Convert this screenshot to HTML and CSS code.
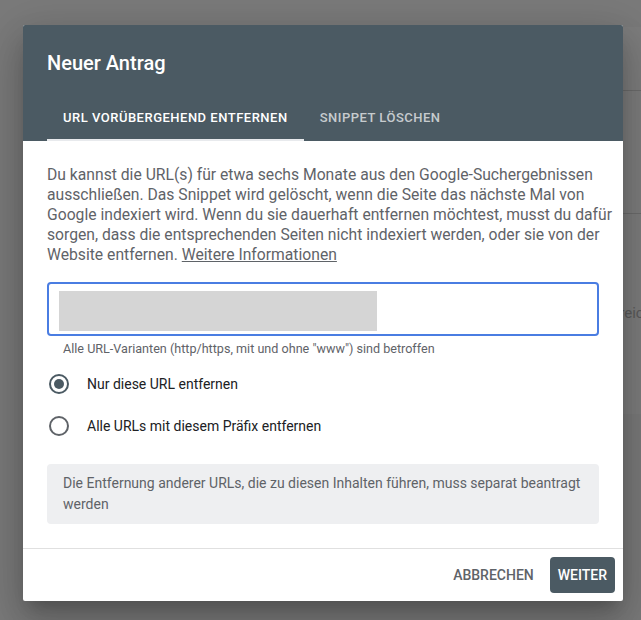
FILE: index.html
```html
<!DOCTYPE html>
<html lang="de">
<head>
<meta charset="utf-8">
<title>Neuer Antrag</title>
<link rel="stylesheet" href="styles.css">
</head>
<body>
<div class="page">
  <div class="bg-card">
    <div class="bg-row bg-row-1"></div>
    <div class="bg-row bg-row-2"></div>
    <span class="bg-text">Bereich</span>
  </div>
</div>
<div class="dialog">
  <div class="dialog-header">
    <h1 class="dialog-title">Neuer Antrag</h1>
    <div class="tabs">
      <div class="tab tab-active">URL vorübergehend entfernen</div>
      <div class="tab">Snippet löschen</div>
    </div>
  </div>
  <div class="dialog-body">
    <p class="intro">Du kannst die URL(s) für etwa sechs Monate aus den Google-Suchergebnissen ausschließen. Das Snippet wird gelöscht, wenn die Seite das nächste Mal von Google indexiert wird. Wenn du sie dauerhaft entfernen möchtest, musst du dafür sorgen, dass die entsprechenden Seiten nicht indexiert werden, oder sie von der Website entfernen. <a class="link" href="#">Weitere Informationen</a></p>
    <div class="url-field"><div class="redacted"></div></div>
    <div class="helper">Alle URL-Varianten (http/https, mit und ohne "www") sind betroffen</div>
    <div class="radios">
      <label class="radio-row">
        <span class="radio radio-on"><span class="radio-dot"></span></span>
        <span class="radio-label">Nur diese URL entfernen</span>
      </label>
      <label class="radio-row">
        <span class="radio"></span>
        <span class="radio-label">Alle URLs mit diesem Präfix entfernen</span>
      </label>
    </div>
    <div class="note">Die Entfernung anderer URLs, die zu diesen Inhalten führen, muss separat beantragt werden</div>
  </div>
  <div class="dialog-footer">
    <button class="btn btn-text">Abbrechen</button>
    <button class="btn btn-primary">Weiter</button>
  </div>
</div>
</body>
</html>
```

FILE: styles.css
```css
html, body {
  margin: 0;
  padding: 0;
}
body {
  width: 641px;
  height: 620px;
  overflow: hidden;
  background: #7a7a7a;
  font-family: Roboto, "Liberation Sans", Arial, sans-serif;
  position: relative;
}
.page {
  position: absolute;
  inset: 0;
}
.bg-card {
  position: absolute;
  top: 27px;
  left: 300px;
  right: 0;
  height: 387px;
  background: #7d7d7d;
}
.bg-row {
  position: absolute;
  left: 0;
  right: 0;
  height: 1px;
  background: #6c6c6c;
}
.bg-row-1 { top: 63px; }
.bg-row-2 { top: 186px; }
.bg-text {
  position: absolute;
  top: 277px;
  left: 302px;
  font-size: 15px;
  color: #5a5a5a;
}
.dialog {
  position: relative;
  width: 600px;
  margin: 25px 0 0 23px;
  background: #fff;
  border-radius: 2px;
  overflow: hidden;
  box-shadow: 0 11px 15px -7px rgba(0,0,0,.2), 0 24px 38px 3px rgba(0,0,0,.14), 0 9px 46px 8px rgba(0,0,0,.12);
}
.dialog-header {
  background: #4b5a63;
  padding: 24px 0 0 24px;
}
.dialog-title {
  margin: 0 0 16px;
  font-size: 20px;
  line-height: 28px;
  font-weight: 500;
  color: #fff;
}
.tabs {
  display: flex;
}
.tab {
  height: 48px;
  box-sizing: border-box;
  padding: 0 16px;
  display: flex;
  align-items: center;
  font-size: 13px;
  font-weight: 500;
  letter-spacing: 0.5px;
  text-transform: uppercase;
  color: rgba(255,255,255,.7);
}
.tab-active {
  color: #fff;
  border-bottom: 2px solid #e8eaed;
  padding-top: 2px;
}
.dialog-body {
  padding: 24px;
}
.intro {
  margin: 0 -14px 0 0;
  font-size: 15.7px;
  line-height: 20px;
  color: #5f6368;
}
.link {
  color: #5f6368;
  text-decoration: underline;
}
.url-field {
  margin-top: 17px;
  height: 54px;
  box-sizing: border-box;
  border: 2px solid #4a7de2;
  border-radius: 4px;
  padding: 7px 10px;
}
.redacted {
  width: 318px;
  height: 40px;
  background: #d5d5d5;
}
.helper {
  padding: 5px 0 0 16px;
  font-size: 12.6px;
  line-height: 16px;
  color: #5f6368;
}
.radios {
  display: flex;
  flex-direction: column;
  gap: 18px;
  margin-top: 15px;
}
.radio-row {
  display: flex;
  align-items: center;
  gap: 18px;
  height: 24px;
  padding-left: 2px;
}
.radio {
  width: 20px;
  height: 20px;
  box-sizing: border-box;
  border: 2px solid #5f6368;
  border-radius: 50%;
  display: flex;
  align-items: center;
  justify-content: center;
}
.radio-on {
  border-color: #4b5a63;
}
.radio-dot {
  width: 10px;
  height: 10px;
  border-radius: 50%;
  background: #4b5a63;
}
.radio-label {
  font-size: 14px;
  color: #202124;
}
.note {
  margin-top: 26px;
  background: #eeeff1;
  border-radius: 4px;
  padding: 9px 16px;
  font-size: 14px;
  line-height: 21px;
  color: #5f6368;
}
.dialog-footer {
  border-top: 1px solid #e0e0e0;
  padding: 8px;
  display: flex;
  justify-content: flex-end;
  gap: 8px;
}
.btn {
  height: 36px;
  padding: 0 8px;
  border: none;
  border-radius: 4px;
  font-family: inherit;
  font-size: 14px;
  font-weight: 500;
  text-transform: uppercase;
  background: transparent;
}
.btn-text {
  color: #5f6368;
}
.btn-primary {
  background: #4b5a63;
  color: #fff;
}
```
